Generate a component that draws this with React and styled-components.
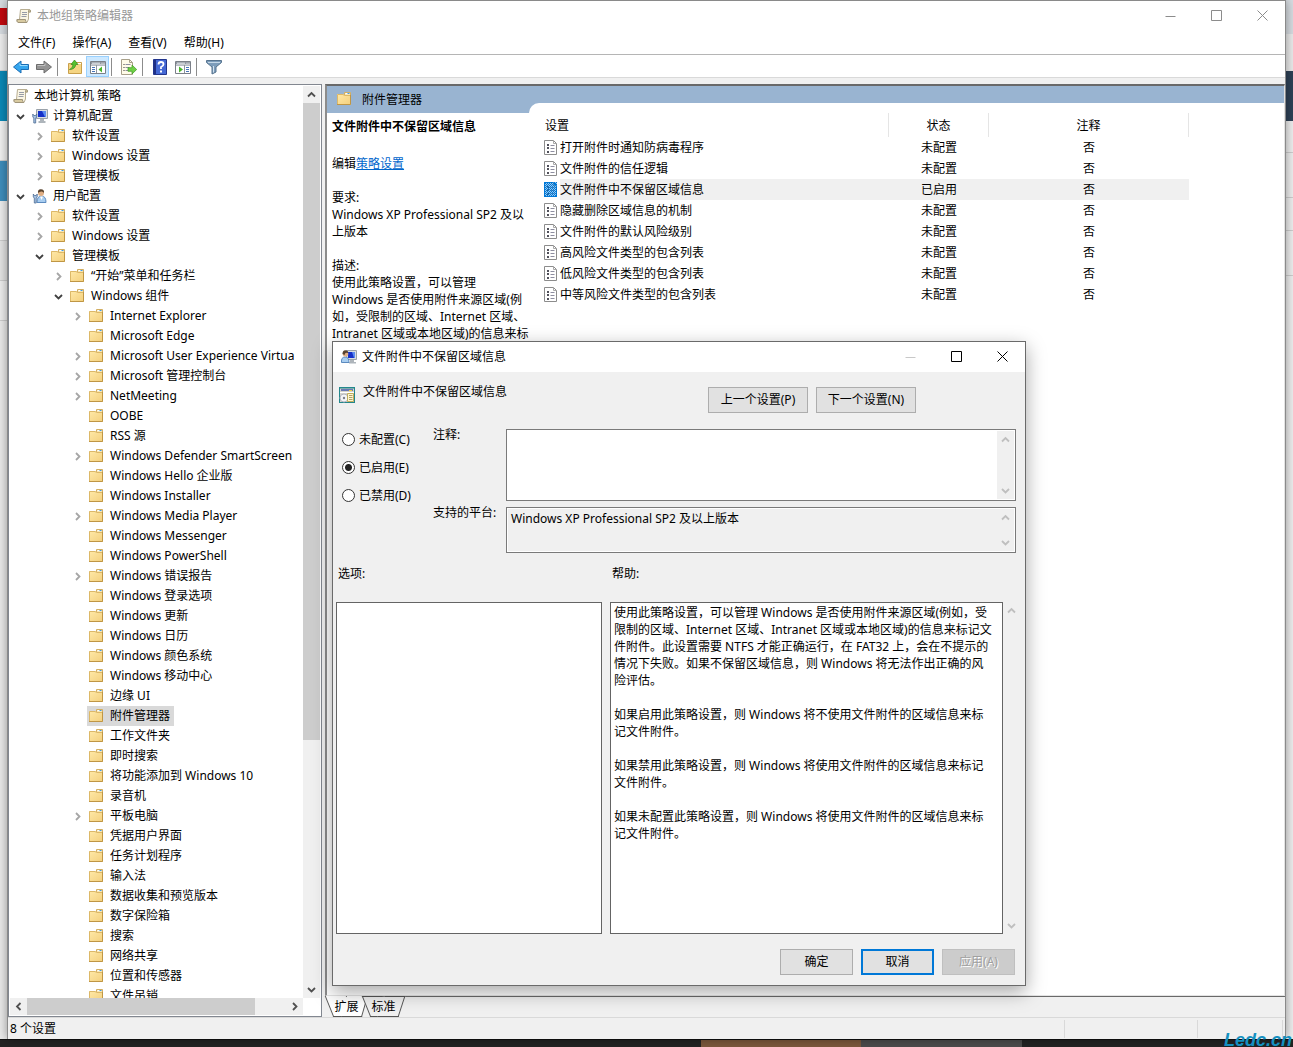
import React, { useState } from "react";
import styled, { createGlobalStyle, css } from "styled-components";

const GlobalStyle = createGlobalStyle`
  * { box-sizing: border-box; }
  body {
    margin: 0;
    background: #ececec;
    color: #000;
    font: 12px/17px "Noto Sans", "Noto Sans CJK SC", sans-serif;
  }
  button, input, textarea, table { font: inherit; color: inherit; }
`;

/* ---------- desktop ---------- */

const Desktop = styled.div`
  position: relative;
  display: grid;
  grid-template: minmax(0, 1fr) 8px / 7px minmax(0, 1fr) 7px;
  height: 100vh;
  overflow: hidden;
`;

const Strip = styled.div`
  display: flex;
  flex-direction: column;
  overflow: hidden;
`;

const Block = styled.div`
  flex: ${(p) => (p.$h ? `0 0 ${p.$h}px` : "1")};
  background: ${(p) => p.$bg};
  border-bottom: ${(p) => (p.$line ? "1px solid #cfcfcf" : "0")};
`;

const Taskbar = styled.div`
  grid-column: 1 / -1;
  display: grid;
  grid-template-columns: 701fr 160fr 161fr 271fr;
  background: #232323;
  border-top: 1px solid #111;
`;

const Task = styled.div`
  grid-column: ${(p) => p.$col};
  background: ${(p) => p.$bg};
`;

const Watermark = styled.span`
  position: absolute;
  right: 1px;
  bottom: 0;
  z-index: 3;
  font: italic bold 18px/14px "Liberation Sans", Arial, sans-serif;
  color: #1590c0;
`;

/* ---------- window chrome ---------- */

const Window = styled.main`
  position: relative;
  z-index: 1;
  display: flex;
  flex-direction: column;
  min-width: 0;
  border: 1px solid #8a8a8a;
  border-bottom: 0;
  background: #f0f0f0;
  box-shadow: 0 0 10px rgba(0, 0, 0, 0.4);
`;

const TitleBar = styled.header`
  display: flex;
  align-items: center;
  height: 30px;
  padding-left: ${(p) => p.$pad}px;
  background: #fff;
  color: ${(p) => (p.$inactive ? "#999" : "#000")};
`;

const TitleText = styled.h1`
  flex: 1;
  margin: 0;
  padding: 0 0 2px 5px;
  font-size: 12px;
  font-weight: 400;
`;

const CaptionButton = styled.button`
  display: grid;
  place-items: center;
  width: 46px;
  height: 30px;
  padding: 0 0 2px;
  border: 0;
  background: none;
  color: ${(p) => p.$tone};
`;

const MenuBar = styled.nav`
  display: flex;
  gap: 1px;
  height: 24px;
  padding-left: 2px;
  background: #fff;
  border-bottom: 1px solid #b5b5b5;
`;

const MenuItem = styled.button`
  padding: 0 8px;
  border: 0;
  background: none;
`;

const ToolBar = styled.div`
  display: flex;
  align-items: flex-end;
  height: 23px;
  padding-left: 1px;
  background: #fff;
  border-bottom: 1px solid #d9d9d9;
`;

const Tool = styled.button`
  display: grid;
  place-items: center;
  width: 23px;
  height: 21px;
  padding: 1px 0 0;
  border: 1px solid ${(p) => (p.$on ? "#99d1ff" : "transparent")};
  background: ${(p) => (p.$on ? "#cce8ff" : "none")};
`;

const ToolRule = styled.span`
  width: 1px;
  height: 18px;
  margin: 0 5px 1px 2px;
  background: #8c8c8c;
`;

const Workspace = styled.div`
  flex: 1;
  display: grid;
  grid-template-columns: 314px minmax(0, 1fr);
  gap: 3px;
  min-height: 0;
  padding-top: 6px;
`;

/* ---------- tree ---------- */

const TreePanel = styled.section`
  display: grid;
  grid-template: minmax(0, 1fr) 17px / minmax(0, 1fr) 17px;
  min-height: 0;
  padding: 1px;
  border: 1px solid #828790;
  background: #fff;
`;

const Tree = styled.ul`
  margin: 0;
  padding: 0 0 0 1px;
  overflow: hidden;
  list-style: none;
`;

const TreeRow = styled.li`
  display: flex;
  align-items: center;
  height: 20px;
  padding-left: ${(p) => Math.max(0, p.$level - 1) * 19}px;
`;

const Twisty = styled.span`
  display: grid;
  place-items: center;
  flex: 0 0 19px;
`;

const TreeLabel = styled.button`
  display: flex;
  align-items: center;
  gap: 5px;
  height: 20px;
  padding: 0 4px 0 2px;
  border: 0;
  white-space: nowrap;
  background: ${(p) => (p.$selected ? "#d9d9d9" : "none")};
`;

const TreeText = styled.span`
  padding-bottom: 2px;
`;

/* ---------- scroll bars ---------- */

const Track = styled.div`
  grid-row: ${(p) => p.$line};
  display: flex;
  flex-direction: ${(p) => (p.$row ? "row" : "column")};
  justify-content: space-between;
  ${(p) => (p.$row ? "height: 17px;" : "width: 17px;")}
  background: #f0f0f0;
  color: ${(p) => (p.$off ? "#bfbfbf" : "#505050")};
`;

const ArrowButton = styled.button`
  display: grid;
  place-items: center;
  flex: 0 0 17px;
  padding: 0;
  border: 0;
  background: none;
`;

const ThumbLane = styled.div`
  flex: 1;
  display: flex;
  flex-direction: ${(p) => (p.$row ? "row" : "column")};
`;

const Thumb = styled.div`
  flex: 0 0 ${(p) => p.$share}%;
  background: #cdcdcd;
`;

/* ---------- details ---------- */

const Details = styled.section`
  display: flex;
  flex-direction: column;
  min-width: 0;
  min-height: 0;
`;

const DetailsFrame = styled.div`
  flex: 1;
  display: grid;
  grid-template: 17px minmax(0, 1fr) / 202px minmax(0, 1fr);
  min-height: 0;
  border-style: solid;
  border-width: 2px 1px 1px 2px;
  border-color: #696969 #e3e3e3 #e3e3e3 #8c8c8c;
  background: #99b4d1;
`;

const NodeHeading = styled.h2`
  grid-row: 1 / 3;
  grid-column: 1;
  display: flex;
  align-items: center;
  gap: 9px;
  height: 26px;
  margin: 0;
  padding-left: 10px;
  font-size: 12px;
  font-weight: 400;
`;

const Summary = styled.article`
  grid-row: 2;
  grid-column: 1;
  min-width: 0;
  margin-top: 10px;
  padding: 5px 0 0 5px;
  background: #fff;
  white-space: nowrap;
`;

const SummaryTitle = styled.h3`
  margin: 0 0 20px;
  font-size: 12px;
  font-weight: 700;
`;

const Paragraph = styled.p`
  margin: 0 0 17px;
  white-space: pre;
`;

const Link = styled.a`
  color: #0066cc;
  text-decoration: underline;
`;

const ListPane = styled.div`
  grid-row: 2;
  grid-column: 2;
  padding: 10px 0 0 10px;
  border-top-left-radius: 10px;
  background: #fff;
`;

const SettingsTable = styled.table`
  width: 650px;
  table-layout: fixed;
  border-collapse: collapse;
`;

const HeadCell = styled.th`
  height: 24px;
  padding: 0 0 0 ${(p) => (p.$left ? 6 : 0)}px;
  border-right: 1px solid #e5e5e5;
  font-weight: 400;
  text-align: ${(p) => (p.$left ? "left" : "center")};
`;

const Cell = styled.td`
  height: 21px;
  padding: 0 0 0 1px;
  text-align: center;
  background: ${(p) => (p.$selected ? "#f0f0f0" : "none")};
`;

const NameCell = styled.td`
  padding: 0 0 0 5px;
`;

const NameRow = styled.div`
  display: flex;
  align-items: center;
  height: 21px;
`;

const Name = styled.span`
  flex: 1;
  padding: 2px 0;
  text-align: left;
  background: ${(p) => (p.$selected ? "#f0f0f0" : "none")};
`;

const Tabs = styled.div`
  display: flex;
  height: 21px;
  border-top: 1px solid #696969;
`;

const Tab = styled.button`
  position: relative;
  z-index: 0;
  width: 40px;
  height: 21px;
  margin: -1px -3px 0 0;
  padding: 0 0 0 3px;
  border: 0;
  background: none;
  &::before, &::after {
    content: "";
    position: absolute;
    z-index: -1;
    top: 0;
    bottom: 0;
    width: 50%;
    background: ${(p) => (p.$active ? "#fff" : "#f0f0f0")};
    border: 0 solid #555;
    border-bottom-width: 1px;
    border-top-width: ${(p) => (p.$active ? 0 : 1)}px;
  }
  &::before { left: 4px; border-left-width: 1px; transform: skewX(22deg); }
  &::after { right: 0; border-right-width: 1px; transform: skewX(${(p) => (p.$active ? -16 : -18)}deg); }
`;

const StatusBar = styled.footer`
  display: flex;
  height: 22px;
  padding: 2px 2px 1px;
  border-top: 1px solid #d9d9d9;
`;

const StatusCell = styled.span`
  flex: ${(p) => (p.$w ? `0 0 ${p.$w}px` : "1")};
  border-right: 1px solid #d9d9d9;
`;

/* ---------- dialog ---------- */

const Dialog = styled.section`
  position: absolute;
  z-index: 2;
  left: 332px;
  top: 341px;
  width: 694px;
  border: 1px solid #6a6a6a;
  background: #f0f0f0;
  box-shadow: 0 6px 18px rgba(0, 0, 0, 0.35);
`;

const DialogBody = styled.form`
  padding: 15px 9px 10px 3px;
`;

const DialogHead = styled.div`
  display: flex;
  gap: 8px;
  height: 42px;
  padding: 0 100px 0 3px;
`;

const DialogHeading = styled.h2`
  flex: 1;
  margin: -4px 0 0;
  font-size: 12px;
  line-height: 17px;
  font-weight: 400;
`;

const PushButton = styled.button`
  width: ${(p) => p.$w}px;
  height: 26px;
  padding: 0 0 2px;
  border: 1px solid #adadad;
  background: #e1e1e1;
  ${(p) =>
    p.$primary &&
    css`
      border: 2px solid #0078d7;
    `}
  &:disabled {
    border-color: #bfbfbf;
    background: #ccc;
    color: #a0a0a0;
    text-shadow: 1px 1px #fff;
  }
`;

const StateGrid = styled.div`
  display: grid;
  grid-template-columns: 87px 69px minmax(0, 1fr);
  grid-template-rows: 72px 46px;
  gap: 6px 4px;
  padding-left: 6px;
`;

const Radios = styled.fieldset`
  grid-row: 1 / 3;
  display: flex;
  flex-direction: column;
  gap: 11px;
  margin: 0;
  padding: 2px 0 0;
  border: 0;
`;

const RadioLabel = styled.label`
  display: flex;
  align-items: center;
  gap: 4px;
  white-space: nowrap;
`;

const Radio = styled.input`
  appearance: none;
  width: 13px;
  height: 13px;
  margin: 0;
  border: 1px solid #333;
  border-radius: 50%;
  background: #fff;
  &:checked { background: radial-gradient(circle, #222 0 3px, #fff 4px); }
`;

const FieldLabel = styled.label`
  white-space: nowrap;
  margin-top: -3px;
`;

const Field = styled.div`
  display: flex;
  padding: 1px;
  border: 1px solid #7a7a7a;
  background: #fff;
`;

const TextArea = styled.textarea`
  flex: 1;
  min-width: 0;
  padding: ${(p) => (p.$help ? "0 2px" : "1px 3px")};
  border: 0;
  outline: 0;
  resize: none;
  overflow: hidden;
  white-space: pre;
  line-height: 17px;
  background: ${(p) => (p.$grey ? "#f0f0f0" : "#fff")};
`;

const Columns = styled.div`
  display: grid;
  grid-template-columns: 266px minmax(0, 1fr) 17px;
  grid-template-rows: 17px 332px;
  row-gap: 20px;
  margin: 12px -4px 0 0;
`;

const ColumnLabel = styled.label`
  padding-left: ${(p) => p.$pad}px;
  grid-column: ${(p) => p.$col};
`;

const OptionsBox = styled.div`
  grid-row: 2;
  border: 1px solid #646464;
  background: #fff;
`;

const HelpBox = styled.div`
  grid-row: 2;
  display: flex;
  margin-left: 8px;
  padding: 1px;
  border: 1px solid #646464;
  background: #fff;
`;

const DialogFoot = styled.div`
  display: flex;
  justify-content: flex-end;
  gap: 8px;
  padding: 15px 1px 0 0;
`;

/* ---------- icons ---------- */

const Svg = ({ size = 16, children }) => (
  <svg width={size} height={size} viewBox={`0 0 ${size} ${size}`} aria-hidden="true">
    {children}
  </svg>
);

const FolderIcon = () => (
  <Svg>
    <defs>
      <linearGradient id="fold" x1="0" y1="0" x2="1" y2="1">
        <stop offset="0" stopColor="#ffe9a8" />
        <stop offset="1" stopColor="#f3cf7c" />
      </linearGradient>
    </defs>
    <path d="M7.500 4V1.500H13.500V5H7.500" fill="#f8e6b4" stroke="#d2ae62" />
    <path d="M8.500 2.500h3" stroke="#fff" />
    <path d="M10.500 2.500h2" stroke="#3f9be8" />
    <path d="M0 3H6L7.500 4H14V14H0Z" fill="url(#fold)" />
    <path d="M.5 14V3.500H6L7.500 4.500H13" fill="none" stroke="#dcb868" />
    <path d="M0 13.500H13.500V4" fill="none" stroke="#bf9645" />
  </Svg>
);

const ScrollIcon = () => (
  <Svg>
    <path d="M4.500 1.500H13q2 0 1.500 2.500H12.500V11L11 14.500H2Q.5 13.500 1 11.500H3.500Z" fill="#fbf6e4" stroke="#b8ae92" />
    <path d="M12.500 4V2.500q.8-1 2 0V4Z" fill="#d6c9a0" stroke="#a59a7c" />
    <path d="M1 11.500H9.500q-.5 2 1.500 3H2Q.7 13.500 1 11.500" fill="#d8caa0" stroke="#a0957a" />
    <path d="M6 4.500h5M6 6.500h5M5.500 8.500h5" stroke="#989ca8" />
  </Svg>
);

const ComputerIcon = () => (
  <Svg>
    <path d="M4.500 1.500H15.500V10.500H4.500Z" fill="#d8dde2" stroke="#9aa2aa" />
    <path d="M6 3H14V9H6Z" fill="#1530c8" />
    <path d="M10 3H14V9H13Z" fill="#5c8cf0" />
    <path d="M8 11h4v2H8ZM6.500 13h7v2h-7Z" fill="#aeb5bb" />
    <path d="M.8 6v3L1.800 10v5H3.700V10L4.700 9V6L3.700 7.500H1.800Z" fill="#a8c4e4" stroke="#4c6c94" strokeWidth=".8" />
  </Svg>
);

const UserIcon = () => (
  <Svg>
    <path d="M5 14.500Q5 8 9.500 8T14 14.500Z" fill="#a8cdf0" stroke="#5b8abf" />
    <path d="M8 8.500 9.500 12 11 8.500Z" fill="#fff" />
    <circle cx="9" cy="5" r="3" fill="#dfae84" />
    <path d="M6 5Q5.500 1 9 1.200T12 5Q11 3 9 3.500T6 5" fill="#59442f" />
    <path d="M1.300 6v3L2.300 10v5H4.200V10L5.200 9V6L4.200 7.500H2.300Z" fill="#a8c4e4" stroke="#4c6c94" strokeWidth=".8" />
  </Svg>
);

const UserComputerIcon = () => (
  <Svg>
    <path d="M5.500 1.500H15.500V10.500H5.500Z" fill="#d8dde2" stroke="#9aa2aa" />
    <path d="M7 3H14V9H7Z" fill="#1530c8" />
    <path d="M11 3H14V9H13Z" fill="#5c8cf0" />
    <path d="M9 11h4v2H9ZM8 13h7v1.500H8Z" fill="#aeb5bb" />
    <path d="M.5 13.500Q0 8 4 8t4 5.500Z" fill="#a8cdf0" stroke="#5b8abf" />
    <circle cx="4.500" cy="4.800" r="2.800" fill="#dfae84" />
    <path d="M1.500 5Q1.500 1 4.500 1.200T7 4Q4 3 3.500 6Z" fill="#59442f" />
  </Svg>
);

const PolicyIcon = () => (
  <Svg>
    <path d="M0 0H16V16H0Z" fill="#23878c" />
    <path d="M1 1.500H15V15H1Z" fill="#d6d3cb" />
    <path d="M2 2H14V4H2Z" fill="#6a78b4" />
    <path d="M10 3h3v1h-3Z" fill="#f3cf3c" />
    <path d="M1 5H15V6H1Z" fill="#fff" />
    <circle cx="5" cy="11" r="4" fill="#f5f5f8" stroke="#b4b6c0" />
    <circle cx="5" cy="11" r="1.200" fill="#7c7f8c" />
    <path d="M8.500 6.500H14.500V14.500H8.500Z" fill="#fdf6d0" stroke="#c0ac5c" />
    <path d="M10 8.500h3.500M10 10.500h3.500M10 12.500h3.500" stroke="#b0a068" />
  </Svg>
);

const SettingIcon = ({ selected }) => (
  <Svg>
    <path d="M.5.5H9.500L12.500 3.500V14.500H.5Z" fill="#fff" stroke={selected ? "#0078d7" : "#8c8c8c"} />
    <path d="M9.500.5V3.500H12.500" fill="none" stroke="#a8a8a8" />
    <path d="M3 4h2v2H3ZM3 7h2v2H3ZM3 11h2v2H3Z" fill="#50505a" />
    <path d="M6.500 5.500h4M6.500 8.500h4M6.500 11.500h4" stroke="#8e8ea0" />
    {selected && (
      <>
        <defs>
          <pattern id="dither" width="2" height="2" patternUnits="userSpaceOnUse">
            <path d="M0 0h1v1H0ZM1 1h1v1H1Z" fill="#0078d7" />
          </pattern>
        </defs>
        <path d="M0 0H13V15H0Z" fill="#0078d7" opacity=".4" />
        <path d="M0 0H13V15H0Z" fill="url(#dither)" shapeRendering="crispEdges" />
      </>
    )}
  </Svg>
);

const ArrowIcon = ({ forward }) => (
  <Svg>
    <path
      d={forward ? "M.5 5.500H8V2L15.500 8 8 14V10.500H.5Z" : "M15.500 5.500H8V2L.5 8 8 14V10.500H15.500Z"}
      fill={forward ? "#949494" : "#35a6ee"}
      stroke={forward ? "#6c6c6c" : "#1b6db4"}
    />
    <path d={forward ? "M1.500 6.500H9V4.500" : "M14.500 6.500H7V4.500"} fill="none" stroke={forward ? "#c0c0c0" : "#9adcff"} />
  </Svg>
);

const UpFolderIcon = () => (
  <Svg>
    <path d="M1.500 4.500H8L9 3.500H14.500V14.500H1.500Z" fill="#f5d583" stroke="#c9a04c" />
    <path d="M10 4.500h4" stroke="#fff" />
    <path d="M2.500 10.500Q6 9 6 5.500H4L7.500 1 11 5.500H8.800Q8 10.500 2.500 10.500Z" fill="#56c22e" stroke="#34891a" strokeWidth=".7" />
  </Svg>
);

const PaneIcon = ({ play }) => (
  <Svg>
    <path d="M.5 2.500H15.500V14.500H.5Z" fill="#fff" stroke="#7b8088" />
    <path d="M1 3H15V5.500H1Z" fill="#8e959f" />
    <path d="M2 4.200h8" stroke="#e8ebef" />
    <path d="M11.500 4.200h1M13.500 4.200h1" stroke="#fff" />
    <path d="M1 6.500H15" stroke="#b8bdc4" />
    {play ? (
      <>
        <path d="M4 7.500 8 10.500 4 13.500Z" fill="#48b52c" />
        <path d="M9.500 6V14" stroke="#8e959f" />
        <path d="M11 8.500h3M11 10.500h3M11 12.500h3" stroke="#4774b8" />
      </>
    ) : (
      <>
        <path d="M12 7.500 8.500 10.500 12 13.500Z" fill="#48b52c" />
        <path d="M6.500 6V14" stroke="#8e959f" />
        <path d="M2 8.500h3M2 10.500h3M2 12.500h3" stroke="#4774b8" />
      </>
    )}
  </Svg>
);

const ExportIcon = () => (
  <Svg>
    <path d="M.5.5H8.500L11.500 3.500V15.500H.5Z" fill="#fffbe8" stroke="#a8a08a" />
    <path d="M8.500.5V3.500H11.500" fill="none" stroke="#a8a08a" />
    <path d="M2.500 5.500h1M2.500 8.500h1M2.500 11.500h1" stroke="#333" />
    <path d="M4.500 5.500h5M4.500 8.500h4M4.500 11.500h4" stroke="#8e8ea0" />
    <path d="M7 8.700H11V6L15.700 10.500 11 15V12.300H7Z" fill="#6fd046" stroke="#3d9a22" strokeWidth=".7" />
  </Svg>
);

const HelpIcon = () => (
  <Svg>
    <path d="M1.500.5H14.500V15.500H1.500Z" fill="#4468d4" stroke="#22358c" />
    <path d="M2 1H4V15H2Z" fill="#1f2f86" />
    <path d="M6.500 5.500Q6.500 3 9 3t2.500 2.300Q11.500 7 9 8V10" fill="none" stroke="#fff" strokeWidth="1.800" />
    <path d="M8 11.500h2v2H8Z" fill="#fff" />
  </Svg>
);

const FilterIcon = () => (
  <Svg>
    <path d="M.5 1.500H15.500V3.500L10 8V13L6 15V8L.5 3.500Z" fill="#7c9cba" stroke="#56738e" />
    <path d="M2 3.500H14" stroke="#c5d8e8" />
    <path d="M7.500 7v6.500" stroke="#d2e2ef" />
  </Svg>
);

const chevrons = {
  up: "M1 6.500 4.500 3 8 6.500",
  down: "M1 3 4.500 6.500 8 3",
  left: "M6.500 1 3 4.500 6.500 8",
  right: "M3 1 6.500 4.500 3 8",
};

const Chevron = ({ dir, color = "currentColor" }) => (
  <Svg size={9}>
    <path d={chevrons[dir]} fill="none" stroke={color} strokeWidth="1.800" />
  </Svg>
);

const captionPaths = {
  最小化: "M.5 6.500H10.500",
  最大化: "M.5.5H10.500V10.500H.5Z",
  关闭: "M.5.5 10.500 10.500M10.500.5.5 10.500",
};

const Captions = ({ tone, minTone }) =>
  Object.entries(captionPaths).map(([label, d], i) => (
    <CaptionButton key={label} type="button" aria-label={label} $tone={i === 0 ? minTone : tone}>
      <Svg size={11}>
        <path d={d} fill="none" stroke="currentColor" />
      </Svg>
    </CaptionButton>
  ));

const ScrollBar = ({ row, off, share, line = "auto" }) => (
  <Track $row={row} $off={off} $line={line}>
    <ArrowButton type="button" aria-label={row ? "向左滚动" : "向上滚动"}>
      <Chevron dir={row ? "left" : "up"} />
    </ArrowButton>
    <ThumbLane $row={row}>{share ? <Thumb $share={share} /> : null}</ThumbLane>
    <ArrowButton type="button" aria-label={row ? "向右滚动" : "向下滚动"}>
      <Chevron dir={row ? "right" : "down"} />
    </ArrowButton>
  </Track>
);

/* ---------- data ---------- */

const treeRows = [
  [0, "", "本地计算机 策略", ScrollIcon],
  [1, "down", "计算机配置", ComputerIcon],
  [2, "right", "软件设置"],
  [2, "right", "Windows 设置"],
  [2, "right", "管理模板"],
  [1, "down", "用户配置", UserIcon],
  [2, "right", "软件设置"],
  [2, "right", "Windows 设置"],
  [2, "down", "管理模板"],
  [3, "right", "“开始”菜单和任务栏"],
  [3, "down", "Windows 组件"],
  [4, "right", "Internet Explorer"],
  [4, "", "Microsoft Edge"],
  [4, "right", "Microsoft User Experience Virtua"],
  [4, "right", "Microsoft 管理控制台"],
  [4, "right", "NetMeeting"],
  [4, "", "OOBE"],
  [4, "", "RSS 源"],
  [4, "right", "Windows Defender SmartScreen"],
  [4, "", "Windows Hello 企业版"],
  [4, "", "Windows Installer"],
  [4, "right", "Windows Media Player"],
  [4, "", "Windows Messenger"],
  [4, "", "Windows PowerShell"],
  [4, "right", "Windows 错误报告"],
  [4, "", "Windows 登录选项"],
  [4, "", "Windows 更新"],
  [4, "", "Windows 日历"],
  [4, "", "Windows 颜色系统"],
  [4, "", "Windows 移动中心"],
  [4, "", "边缘 UI"],
  [4, "", "附件管理器"],
  [4, "", "工作文件夹"],
  [4, "", "即时搜索"],
  [4, "", "将功能添加到 Windows 10"],
  [4, "", "录音机"],
  [4, "right", "平板电脑"],
  [4, "", "凭据用户界面"],
  [4, "", "任务计划程序"],
  [4, "", "输入法"],
  [4, "", "数据收集和预览版本"],
  [4, "", "数字保险箱"],
  [4, "", "搜索"],
  [4, "", "网络共享"],
  [4, "", "位置和传感器"],
  [4, "", "文件吊销"],
];

const settings = [
  ["打开附件时通知防病毒程序", "未配置"],
  ["文件附件的信任逻辑", "未配置"],
  ["文件附件中不保留区域信息", "已启用"],
  ["隐藏删除区域信息的机制", "未配置"],
  ["文件附件的默认风险级别", "未配置"],
  ["高风险文件类型的包含列表", "未配置"],
  ["低风险文件类型的包含列表", "未配置"],
  ["中等风险文件类型的包含列表", "未配置"],
];

const policyName = "文件附件中不保留区域信息";

const helpText = `使用此策略设置，可以管理 Windows 是否使用附件来源区域(例如，受
限制的区域、Internet 区域、Intranet 区域或本地区域)的信息来标记文
件附件。此设置需要 NTFS 才能正确运行，在 FAT32 上，会在不提示的
情况下失败。如果不保留区域信息，则 Windows 将无法作出正确的风
险评估。

如果启用此策略设置，则 Windows 将不使用文件附件的区域信息来标
记文件附件。

如果禁用此策略设置，则 Windows 将使用文件附件的区域信息来标记
文件附件。

如果未配置此策略设置，则 Windows 将使用文件附件的区域信息来标
记文件附件。`;

const summaryText = `使用此策略设置，可以管理
Windows 是否使用附件来源区域(例
如，受限制的区域、Internet 区域、
Intranet 区域或本地区域)的信息来标`;

/* ---------- parts ---------- */

function PolicyTree() {
  const [selected, setSelected] = useState(31);
  return (
    <TreePanel aria-label="控制台树">
      <Tree>
        {treeRows.map(([level, twisty, text, Icon = FolderIcon], i) => (
          <TreeRow key={i} $level={level}>
            {level > 0 && (
              <Twisty>{twisty && <Chevron dir={twisty} color={twisty === "down" ? "#404040" : "#a6a6a6"} />}</Twisty>
            )}
            <TreeLabel type="button" $selected={i === selected} onClick={() => setSelected(i)}>
              <Icon />
              <TreeText>{text}</TreeText>
            </TreeLabel>
          </TreeRow>
        ))}
      </Tree>
      <ScrollBar share={72.5} />
      <ScrollBar row share={88} />
    </TreePanel>
  );
}

function DetailsPane() {
  return (
    <Details>
      <DetailsFrame>
        <NodeHeading>
          <FolderIcon />
          附件管理器
        </NodeHeading>
        <Summary>
          <SummaryTitle>{policyName}</SummaryTitle>
          <Paragraph>
            编辑<Link href="#edit">策略设置</Link>
          </Paragraph>
          <Paragraph>{"要求:\nWindows XP Professional SP2 及以\n上版本"}</Paragraph>
          <Paragraph>{"描述:\n" + summaryText}</Paragraph>
        </Summary>
        <ListPane>
          <SettingsTable>
            <colgroup>
              <col />
              <col width="100" />
              <col width="200" />
            </colgroup>
            <thead>
              <tr>
                <HeadCell $left>设置</HeadCell>
                <HeadCell>状态</HeadCell>
                <HeadCell>注释</HeadCell>
              </tr>
            </thead>
            <tbody>
              {settings.map(([name, state]) => {
                const on = name === policyName;
                return (
                  <tr key={name}>
                    <NameCell>
                      <NameRow>
                        <SettingIcon selected={on} />
                        <Name $selected={on}>{name}</Name>
                      </NameRow>
                    </NameCell>
                    <Cell $selected={on}>{state}</Cell>
                    <Cell $selected={on}>否</Cell>
                  </tr>
                );
              })}
            </tbody>
          </SettingsTable>
        </ListPane>
      </DetailsFrame>
      <Tabs>
        <Tab type="button" $active>扩展</Tab>
        <Tab type="button">标准</Tab>
      </Tabs>
    </Details>
  );
}

function PolicyDialog() {
  const [state, setState] = useState("已启用(E)");
  return (
    <Dialog role="dialog" aria-label={policyName}>
      <TitleBar $pad={8}>
        <UserComputerIcon />
        <TitleText as="h2">{policyName}</TitleText>
        <Captions tone="#000" minTone="#c8c8c8" />
      </TitleBar>
      <DialogBody onSubmit={(e) => e.preventDefault()}>
        <DialogHead>
          <PolicyIcon />
          <DialogHeading>{policyName}</DialogHeading>
          <PushButton type="button" $w={100}>上一个设置(P)</PushButton>
          <PushButton type="button" $w={100}>下一个设置(N)</PushButton>
        </DialogHead>
        <StateGrid>
          <Radios>
            {["未配置(C)", "已启用(E)", "已禁用(D)"].map((label) => (
              <RadioLabel key={label}>
                <Radio type="radio" name="state" checked={state === label} onChange={() => setState(label)} />
                {label}
              </RadioLabel>
            ))}
          </Radios>
          <FieldLabel htmlFor="comment">注释:</FieldLabel>
          <Field>
            <TextArea id="comment" />
            <ScrollBar off />
          </Field>
          <FieldLabel htmlFor="platform">支持的平台:</FieldLabel>
          <Field>
            <TextArea id="platform" $grey readOnly value="Windows XP Professional SP2 及以上版本" />
            <ScrollBar off />
          </Field>
        </StateGrid>
        <Columns>
          <ColumnLabel as="span" $pad={2} $col={1}>选项:</ColumnLabel>
          <ColumnLabel htmlFor="help" $pad={10} $col={2}>帮助:</ColumnLabel>
          <OptionsBox />
          <HelpBox>
            <TextArea id="help" $help readOnly value={helpText} />
          </HelpBox>
          <ScrollBar off line={2} />
        </Columns>
        <DialogFoot>
          <PushButton type="submit" $w={73}>确定</PushButton>
          <PushButton type="button" $w={73} $primary>取消</PushButton>
          <PushButton type="button" $w={73} disabled>应用(A)</PushButton>
        </DialogFoot>
      </DialogBody>
    </Dialog>
  );
}

export default function App() {
  return (
    <>
      <GlobalStyle />
      <Desktop>
        <Strip>
          <Block $h={8} $bg="#d8dde2" />
          <Block $h={17} $bg="#c4090f" />
          <Block $h={9} $bg="#d8dde2" />
          <Block $h={37} $bg="#f0f0f0" $line />
          <Block $h={50} $bg="#0a8ab8" />
          <Block $h={40} $bg="#f4f4f4" $line />
          <Block $h={40} $bg="#3f8fbe" />
          <Block $h={40} $bg="#f0f0f0" $line />
          <Block $h={40} $bg="#e6e6e6" $line />
          <Block $h={40} $bg="#f0f0f0" $line />
          <Block $bg="#ececec" />
        </Strip>
        <Window>
          <TitleBar $inactive $pad={8}>
            <ScrollIcon />
            <TitleText>本地组策略编辑器</TitleText>
            <Captions tone="#8c8c8c" minTone="#8c8c8c" />
          </TitleBar>
          <MenuBar>
            {["文件(F)", "操作(A)", "查看(V)", "帮助(H)"].map((m) => (
              <MenuItem key={m} type="button">{m}</MenuItem>
            ))}
          </MenuBar>
          <ToolBar>
            <Tool aria-label="后退"><ArrowIcon /></Tool>
            <Tool aria-label="前进"><ArrowIcon forward /></Tool>
            <ToolRule />
            <Tool aria-label="上移"><UpFolderIcon /></Tool>
            <Tool aria-label="控制台树" $on><PaneIcon /></Tool>
            <ToolRule />
            <Tool aria-label="导出列表"><ExportIcon /></Tool>
            <ToolRule />
            <Tool aria-label="帮助"><HelpIcon /></Tool>
            <Tool aria-label="操作窗格"><PaneIcon play /></Tool>
            <ToolRule />
            <Tool aria-label="筛选"><FilterIcon /></Tool>
          </ToolBar>
          <Workspace>
            <PolicyTree />
            <DetailsPane />
          </Workspace>
          <StatusBar>
            <StatusCell>8 个设置</StatusCell>
            <StatusCell $w={133} />
            <StatusCell $w={85} />
          </StatusBar>
        </Window>
        <Strip>
          <Block $h={34} $bg="#d8dde2" />
          <Block $h={37} $bg="#ececec" />
          <Block $h={50} $bg="#2f4257" />
          <Block $h={32} $bg="#f0f0f0" $line />
          <Block $h={45} $bg="#f0f0f0" $line />
          <Block $h={33} $bg="#f0f0f0" $line />
          <Block $h={45} $bg="#f0f0f0" $line />
          <Block $bg="#f0f0f0" />
        </Strip>
        <Taskbar>
          <Task $col={2} $bg="#7c583c" />
          <Task $col={3} $bg="#4c4c4c" />
        </Taskbar>
        <PolicyDialog />
        <Watermark>Ledc.cn</Watermark>
      </Desktop>
    </>
  );
}
